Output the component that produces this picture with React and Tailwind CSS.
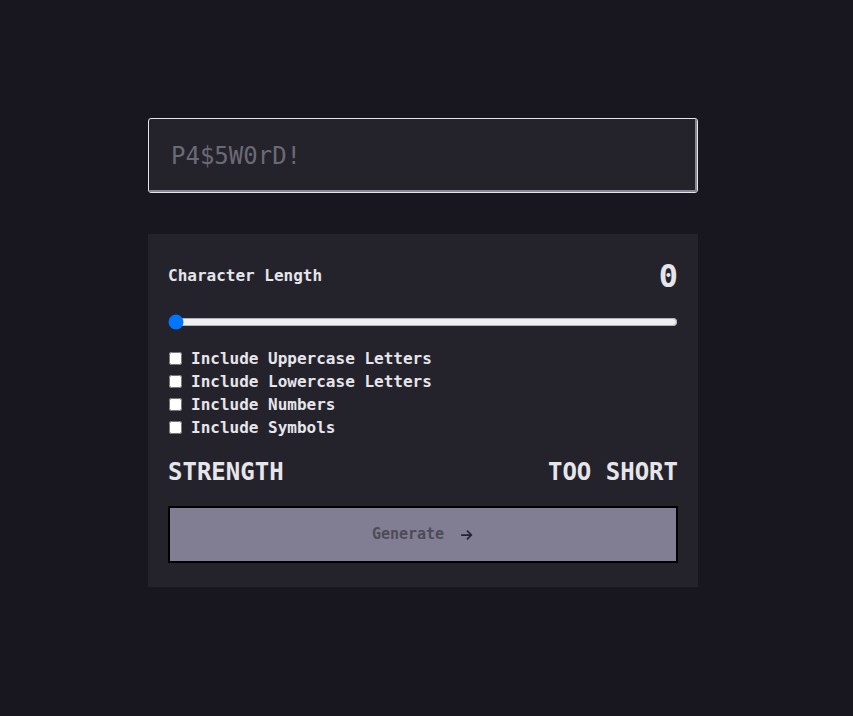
import React, { useState } from 'react';

const options = [
    'Include Uppercase Letters',
    'Include Lowercase Letters',
    'Include Numbers',
    'Include Symbols',
];

const App = () => {
    const [length, setLength] = useState(0);

    return (
        <div className="min-h-screen bg-[#18171f] font-['DejaVu_Sans_Mono',monospace] text-[#e6e5ea]">
            <div className="flex justify-center pt-[118px] pr-[7px]">
                <div className="w-[550px]">
                    {/* Password output */}
                    <div className="h-[75px] rounded-[3px] border border-[#e6e5ea] bg-[#24232c]">
                        <div className="flex h-full items-center rounded-[2px] border-r-2 border-b-2 border-[#8a8894] pt-[2px] pl-[22px] text-[24px] text-[#6b6a73]">
                            P4$5W0rD!
                        </div>
                    </div>

                    {/* Settings card */}
                    <div className="mt-[41px] bg-[#24232c] px-5 pt-[22px] pb-[24px]">
                        <div className="flex items-center justify-between">
                            <span className="text-[16px] font-bold">Character Length</span>
                            <span className="text-[32px] font-bold leading-10">{length}</span>
                        </div>

                        <input
                            type="range"
                            min="0"
                            max="20"
                            value={length}
                            onChange={(e) => setLength(Number(e.target.value))}
                            className="mt-[18px] block w-full accent-[#0075ff]"
                        />

                        <div className="mt-[17px] flex flex-col">
                            {options.map((opt) => (
                                <label key={opt} className="flex h-[23px] items-center gap-[9px] text-[16px] font-bold">
                                    <input type="checkbox" className="m-0 ml-[1px] h-[13px] w-[13px]" />
                                    {opt}
                                </label>
                            ))}
                        </div>

                        <div className="mt-[15px] flex items-center justify-between text-[24px] font-bold">
                            <span>STRENGTH</span>
                            <span>TOO SHORT</span>
                        </div>

                        <button className="mt-[16px] flex h-[57px] w-full items-center justify-center gap-4 border-2 border-black bg-[#817d92] text-[15px] font-bold text-[#4e4c58]">
                            Generate
                            <svg className="h-[14px] w-[14px] text-[#24232c]" viewBox="0 0 16 16" fill="none" stroke="currentColor" strokeWidth="2" strokeLinecap="round" strokeLinejoin="round">
                                <path d="M2 8h11M8.5 3.5L13 8l-4.5 4.5" />
                            </svg>
                        </button>
                    </div>
                </div>
            </div>
        </div>
    );
};

export default App;
